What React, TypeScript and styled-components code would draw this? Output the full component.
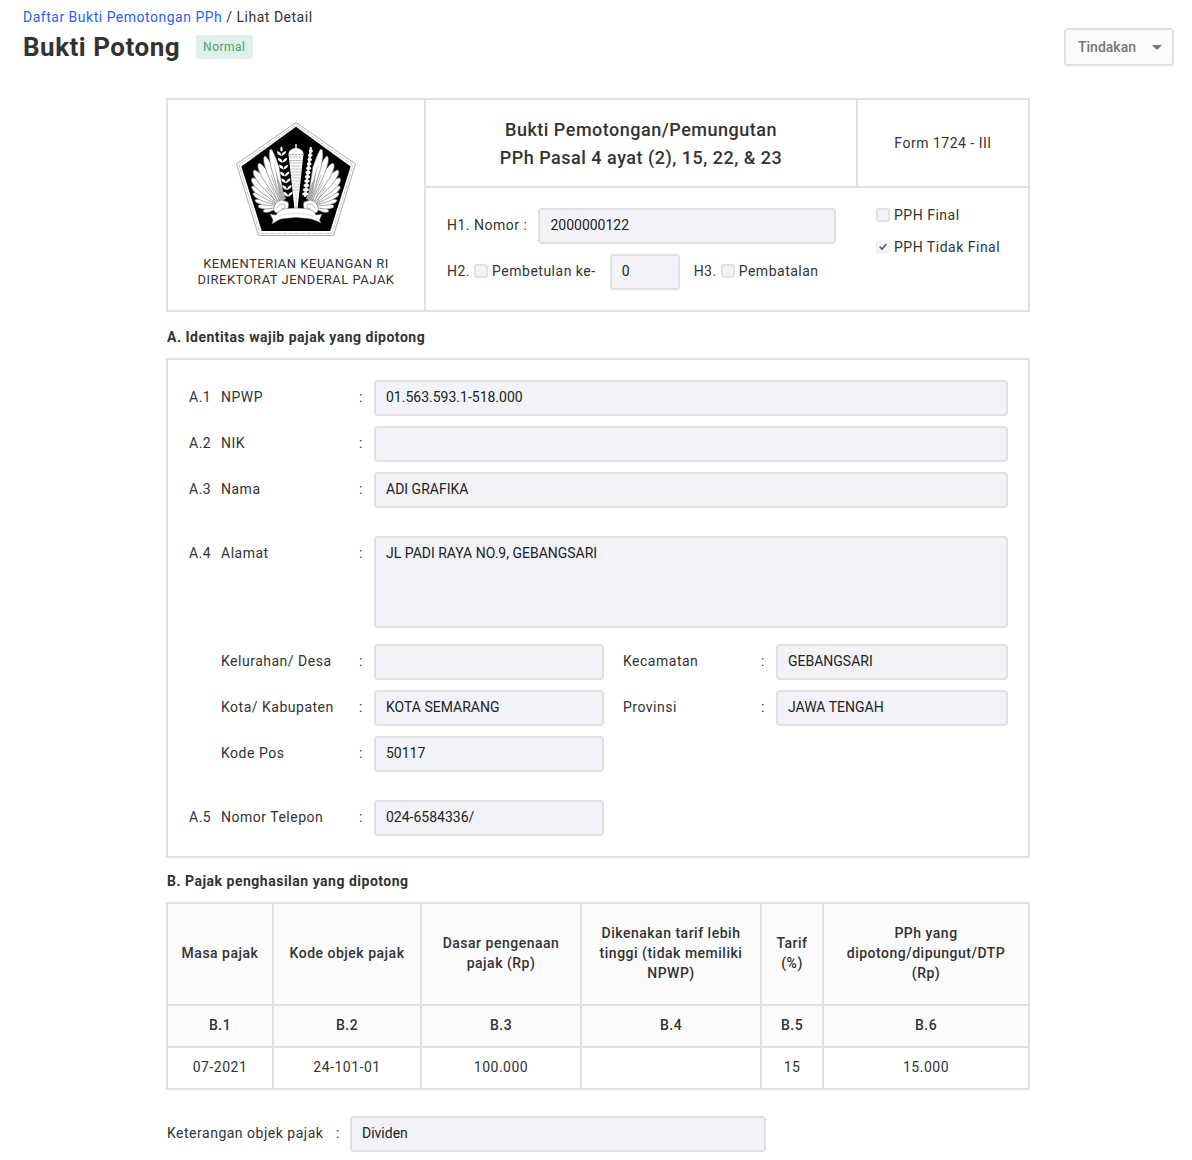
import React from "react";
import styled, { createGlobalStyle } from "styled-components";

const color = {
  text: "#333333",
  line: "#e0e0e0",
  field: "#f2f3f8",
  soft: "#fbfbfb",
  muted: "#757575",
  link: "#2d5ff0",
};

const GlobalStyle = createGlobalStyle`
  *, *::before, *::after { box-sizing: border-box; }
  body {
    margin: 0;
    background: #ffffff;
    color: ${color.text};
    font-family: Roboto, "Liberation Sans", sans-serif;
    font-size: 14px;
    line-height: 20px;
    letter-spacing: 0.036em;
  }
`;

const Page = styled.div`
  padding: 8px 18px 8px 22px;
`;

const TopBar = styled.header`
  display: flex;
  align-items: flex-end;
  justify-content: space-between;
  margin-bottom: 32px;
  padding-left: 1px;
`;

const Breadcrumb = styled.nav`
  line-height: 18px;
  a {
    color: ${color.link};
    text-decoration: none;
  }
`;

const TitleRow = styled.div`
  display: flex;
  align-items: center;
  gap: 16px;
  height: 40px;
  padding-top: 2px;
`;

const Title = styled.h1`
  margin: 0;
  font-size: 26px;
  line-height: 32px;
  font-weight: 700;
`;

const Badge = styled.span`
  padding: 0 7px;
  border-radius: 3px;
  background: #dff0e8;
  color: #4da06f;
  font-size: 12px;
  line-height: 24px;
`;

const ActionButton = styled.button`
  display: flex;
  align-items: center;
  justify-content: space-between;
  gap: 14px;
  min-width: 110px;
  height: 38px;
  padding: 0 10px 0 12px;
  border: 2px solid ${color.line};
  border-radius: 4px;
  background: ${color.soft};
  color: ${color.muted};
  font: inherit;
  font-weight: 500;
`;

const Sheet = styled.main`
  width: 100%;
  max-width: 864px;
  margin: 0 auto;
`;

const FormHead = styled.section`
  display: grid;
  grid-template-columns: 258px 1fr;
  margin-bottom: 16px;
  border: 2px solid ${color.line};
`;

const Ministry = styled.div`
  display: flex;
  flex-direction: column;
  align-items: center;
  gap: 20px;
  padding: 22px 12px;
  border-right: 2px solid ${color.line};
  text-align: center;
  font-size: 13px;
  line-height: 16px;
`;

const HeadTop = styled.div`
  display: grid;
  grid-template-columns: 1fr 172px;
  border-bottom: 2px solid ${color.line};
`;

const FormTitle = styled.h2`
  margin: 0;
  padding: 16px 12px 14px;
  font-size: 18px;
  line-height: 28px;
  font-weight: 500;
  text-align: center;
`;

const FormCode = styled.div`
  display: flex;
  align-items: center;
  justify-content: center;
  border-left: 2px solid ${color.line};
`;

const HeadBottom = styled.div`
  display: grid;
  grid-template-columns: 1fr 132px;
  gap: 30px;
  padding: 20px 20px 20px 21px;
`;

const Stack = styled.div<{ $gap: number }>`
  display: flex;
  flex-direction: column;
  gap: ${(p) => p.$gap}px;
`;

const Inline = styled.div<{ $gap: number }>`
  display: flex;
  align-items: center;
  gap: ${(p) => p.$gap}px;
`;

const InlineLabel = styled.label`
  padding-bottom: 2px;
  white-space: nowrap;
`;

const CheckGroup = styled(Inline)`
  padding-bottom: 2px;
`;

const Input = styled.input<{ $width?: string }>`
  display: block;
  width: ${(p) => p.$width ?? "100%"};
  min-width: 0;
  height: 36px;
  padding: 0 10px 2px;
  border: 2px solid ${color.line};
  border-radius: 4px;
  background: ${color.field};
  color: #222222;
  font-family: inherit;
  font-size: 14px;
`;

const TextArea = styled.textarea`
  display: block;
  width: 100%;
  height: 92px;
  padding: 6px 10px;
  border: 2px solid ${color.line};
  border-radius: 4px;
  background: ${color.field};
  color: #222222;
  font-family: inherit;
  font-size: 14px;
  line-height: 18px;
  resize: none;
`;

const CheckLabel = styled.label`
  display: flex;
  align-items: center;
  gap: 4px;
  line-height: 14px;
  white-space: nowrap;
`;

const Checkbox = styled.input.attrs({ type: "checkbox" })`
  appearance: none;
  display: grid;
  place-items: center;
  flex: none;
  width: 14px;
  height: 14px;
  margin: 0;
  border: 2px solid ${color.line};
  border-radius: 3px;
  background: ${color.field};

  &:checked {
    border-color: ${color.field};
  }
  &:checked::before {
    content: "";
    width: 8px;
    height: 8px;
    background: #666666;
    clip-path: polygon(0 54%, 16% 38%, 38% 58%, 82% 6%, 100% 20%, 40% 94%);
  }
`;

const SectionTitle = styled.h3`
  margin: 0 0 12px;
  padding-left: 1px;
  font-size: 14px;
  line-height: 18px;
  font-weight: 700;
`;

const Identity = styled.section`
  display: flex;
  flex-direction: column;
  gap: 28px;
  margin-bottom: 14px;
  padding: 20px 20px 20px 21px;
  border: 2px solid ${color.line};
`;

const NumberedRow = styled.div`
  display: grid;
  grid-template-columns: 32px 1fr;
  line-height: 34px;
`;

const FieldRow = styled.div`
  display: grid;
  grid-template-columns: 138px 15px 1fr;
  line-height: 34px;
`;

const Halves = styled.div`
  display: grid;
  grid-template-columns: 383fr 385fr;
  gap: 10px 19px;
`;

const TaxTable = styled.table`
  width: 100%;
  margin-bottom: 26px;
  border-collapse: collapse;
  table-layout: fixed;
  text-align: center;

  th, td {
    height: 42px;
    padding: 0 12px 2px;
    border: 2px solid ${color.line};
  }
  th {
    background: ${color.soft};
    font-weight: 500;
  }
  thead tr:first-child th {
    height: 102px;
  }
`;

const NoteRow = styled.div`
  display: grid;
  grid-template-columns: 169px 14px minmax(0, 416px);
  padding-left: 1px;
  line-height: 34px;
`;

const FEATHERS: [number, number, number, number, number][] = [
  [35, 27, 46, 76, 8],
  [29, 34, 45, 77, 8],
  [23, 41, 44, 78, 9],
  [18, 48, 43, 79, 9],
  [16, 56, 42, 80, 9],
  [16, 64, 42, 81, 8],
  [17, 71, 42, 82, 7],
  [19, 78, 42, 83, 6],
  [22, 84, 42, 84, 6],
  [27, 89, 42, 85, 5],
];

function feather([tx, ty, rx, ry, w]: [number, number, number, number, number]) {
  const dx = rx - tx;
  const dy = ry - ty;
  const len = Math.hypot(dx, dy);
  const nx = (-dy / len) * (w / 2);
  const ny = (dx / len) * (w / 2);
  const ax = tx + dx * 0.38;
  const ay = ty + dy * 0.38;
  return `M${tx} ${ty} Q${tx + nx} ${ty + ny} ${ax + nx} ${ay + ny} L${rx + nx * 0.5} ${ry + ny * 0.5} L${rx - nx * 0.5} ${ry - ny * 0.5} L${ax - nx} ${ay - ny} Q${tx - nx * 0.4} ${ty - ny * 0.4} ${tx} ${ty}Z`;
}

function Wing() {
  return (
    <g>
      {[...FEATHERS].reverse().map((f) => (
        <path key={f[1]} d={feather(f)} fill="#fff" stroke="#666" strokeWidth=".6" />
      ))}
      <path d="M36 31 Q40 52 45 64 L50 77 L44 79 Q41 55 36 31Z" fill="#aaa" />
      <path d="M33 60 Q38 68 41 80 M30 65 Q36 71 39 82 M35 53 Q40 64 43 78" fill="none" stroke="#888" strokeWidth=".6" />
      <path d="M38 86 Q39 79 46 78 L52 80 Q54 85 50 89 L41 91 Q37 90 38 86Z" fill="#fff" stroke="#777" strokeWidth=".5" />
      <path d="M41 86 Q44 80 49 83 Q50 87 45 87" fill="none" stroke="#999" strokeWidth=".7" />
    </g>
  );
}

function Emblem() {
  const grains = [0, 1, 2, 3, 4, 5, 6];
  const stripes = [41, 44, 47, 50, 53, 56, 59, 62, 65, 68];
  return (
    <svg width="120" height="114" viewBox="0 0 120 114" role="img" aria-label="Kementerian Keuangan">
      <path d="M60 .5 L119.5 42 L97.5 113.5 H22.5 L.5 42Z" fill="#fff" stroke="#888" strokeWidth=".7" />
      <path d="M60 2.8 L117 43.2 L96 111.4 H24 L3 43.2Z" fill="none" stroke="#999" strokeWidth=".5" strokeDasharray="5 1" />
      <path d="M60 4.8 L114.6 44.5 L94.2 109 H25.8 L5.4 44.5Z" fill="#000" />
      <Wing />
      <g transform="translate(120 0) scale(-1 1)">
        <Wing />
      </g>
      {grains.map((i) => (
        <g key={i} transform={`translate(${45.5 + i * 1.1} ${34 + i * 6.8})`} fill="#fff">
          <path d="M0 0 Q-5 -1 -4.500 -5 Q0 -4 0 0Z" />
          <path d="M0 0 Q5 -2 4.500 -5 Q0 -4 0 0Z" />
        </g>
      ))}
      <ellipse cx="45.500" cy="27" rx="1.200" ry="2.500" fill="#fff" />
      <path d="M75 25 L69 75" stroke="#ddd" strokeWidth="2.400" />
      {[...Array(11)].map((_, i) => (
        <ellipse key={i} cx={74.8 - i * 0.55} cy={29 + i * 4.3} rx={2.1 + i * 0.1} ry="1.700" fill="#fff" />
      ))}
      <path d="M59.300 22 h1.400 v4 Q67 27 67.600 32 L66.800 38 L61.600 86 H58.400 L53.200 38 L52.400 32 Q53 27 59.300 26Z" fill="#fff" />
      <path d="M53 32.500 H67 M53.500 35 H66.500 M53.500 38.500 H66.500" stroke="#777" strokeWidth=".7" strokeDasharray="2 1" />
      {stripes.map((y) => {
        const half = 6.2 - (y - 41) * 0.1;
        return <path key={y} d={`M${60 - half} ${y} H${60 + half}`} stroke="#aaa" strokeWidth=".7" />;
      })}
      <path d="M60 70 V86" stroke="#aaa" strokeWidth=".5" />
      <path d="M34 92 L40 93 Q43 88 48 87 Q60 85 72 87 Q78 88 80 93 L86 92 L83.500 98 L85 101 Q79 98 75 97 Q60 94 45 97 Q40 99 36 102 L37 98Z" fill="#fff" stroke="#666" strokeWidth=".5" />
      <path d="M43 94 Q60 89 77 94" fill="none" stroke="#bbb" strokeWidth="1" strokeDasharray="1.500 1.500" />
    </svg>
  );
}

type FieldProps = { id: string; label: string; value: string; multiline?: boolean };

function Field({ id, label, value, multiline }: FieldProps) {
  return (
    <FieldRow>
      <label htmlFor={id}>{label}</label>
      <span>:</span>
      {multiline ? <TextArea id={id} readOnly value={value} /> : <Input id={id} readOnly value={value} />}
    </FieldRow>
  );
}

const COLUMNS = [
  { width: 106, title: "Masa pajak", code: "B.1", value: "07-2021" },
  { width: 148, title: "Kode objek pajak", code: "B.2", value: "24-101-01" },
  { width: 160, title: "Dasar pengenaan pajak (Rp)", code: "B.3", value: "100.000" },
  { width: 180, title: "Dikenakan tarif lebih tinggi (tidak memiliki NPWP)", code: "B.4", value: "" },
  { width: 62, title: "Tarif (%)", code: "B.5", value: "15" },
  { width: 206, title: "PPh yang dipotong/dipungut/DTP (Rp)", code: "B.6", value: "15.000" },
];

export default function App() {
  return (
    <Page>
      <GlobalStyle />
      <TopBar>
        <div>
          <Breadcrumb aria-label="Breadcrumb">
            <a href="#daftar">Daftar Bukti Pemotongan PPh</a> / <span>Lihat Detail</span>
          </Breadcrumb>
          <TitleRow>
            <Title>Bukti Potong</Title>
            <Badge>Normal</Badge>
          </TitleRow>
        </div>
        <ActionButton type="button" aria-haspopup="menu">
          Tindakan
          <svg width="10" height="5" viewBox="0 0 10 5" aria-hidden="true">
            <path d="M0 0 H10 L5 5Z" fill={color.muted} />
          </svg>
        </ActionButton>
      </TopBar>

      <Sheet>
        <FormHead>
          <Ministry>
            <Emblem />
            <div>
              KEMENTERIAN KEUANGAN RI
              <br />
              DIREKTORAT JENDERAL PAJAK
            </div>
          </Ministry>
          <div>
            <HeadTop>
              <FormTitle>
                Bukti Pemotongan/Pemungutan
                <br />
                PPh Pasal 4 ayat (2), 15, 22, &amp; 23
              </FormTitle>
              <FormCode>Form 1724 - III</FormCode>
            </HeadTop>
            <HeadBottom>
              <Stack $gap={10}>
                <Inline $gap={11}>
                  <InlineLabel htmlFor="nomor">H1. Nomor :</InlineLabel>
                  <Input id="nomor" $width="298px" readOnly value="2000000122" />
                </Inline>
                <Inline $gap={14}>
                  <CheckGroup $gap={4}>
                    <span>H2.</span>
                    <CheckLabel>
                      <Checkbox disabled />
                      Pembetulan ke-
                    </CheckLabel>
                  </CheckGroup>
                  <Input aria-label="Pembetulan ke-" $width="70px" readOnly value="0" />
                  <CheckGroup $gap={4}>
                    <span>H3.</span>
                    <CheckLabel>
                      <Checkbox disabled />
                      Pembatalan
                    </CheckLabel>
                  </CheckGroup>
                </Inline>
              </Stack>
              <Stack $gap={18}>
                <CheckLabel>
                  <Checkbox disabled />
                  PPH Final
                </CheckLabel>
                <CheckLabel>
                  <Checkbox disabled defaultChecked />
                  PPH Tidak Final
                </CheckLabel>
              </Stack>
            </HeadBottom>
          </div>
        </FormHead>

        <SectionTitle>A. Identitas wajib pajak yang dipotong</SectionTitle>
        <Identity>
          <Stack $gap={10}>
            <NumberedRow>
              <span>A.1</span>
              <Field id="npwp" label="NPWP" value="01.563.593.1-518.000" />
            </NumberedRow>
            <NumberedRow>
              <span>A.2</span>
              <Field id="nik" label="NIK" value="" />
            </NumberedRow>
            <NumberedRow>
              <span>A.3</span>
              <Field id="nama" label="Nama" value="ADI GRAFIKA" />
            </NumberedRow>
          </Stack>
          <NumberedRow>
            <span>A.4</span>
            <Stack $gap={16}>
              <Field id="alamat" label="Alamat" value="JL PADI RAYA NO.9, GEBANGSARI" multiline />
              <Halves>
                <Field id="kelurahan" label="Kelurahan/ Desa" value="" />
                <Field id="kecamatan" label="Kecamatan" value="GEBANGSARI" />
                <Field id="kota" label="Kota/ Kabupaten" value="KOTA SEMARANG" />
                <Field id="provinsi" label="Provinsi" value="JAWA TENGAH" />
                <Field id="kodepos" label="Kode Pos" value="50117" />
              </Halves>
            </Stack>
          </NumberedRow>
          <NumberedRow>
            <span>A.5</span>
            <Halves>
              <Field id="telepon" label="Nomor Telepon" value="024-6584336/" />
            </Halves>
          </NumberedRow>
        </Identity>

        <SectionTitle>B. Pajak penghasilan yang dipotong</SectionTitle>
        <TaxTable>
          <colgroup>
            {COLUMNS.map((c) => (
              <col key={c.code} width={c.width} />
            ))}
          </colgroup>
          <thead>
            <tr>
              {COLUMNS.map((c) => (
                <th key={c.code} scope="col">{c.title}</th>
              ))}
            </tr>
            <tr>
              {COLUMNS.map((c) => (
                <th key={c.code} scope="col">{c.code}</th>
              ))}
            </tr>
          </thead>
          <tbody>
            <tr>
              {COLUMNS.map((c) => (
                <td key={c.code}>{c.value}</td>
              ))}
            </tr>
          </tbody>
        </TaxTable>

        <NoteRow>
          <label htmlFor="keterangan">Keterangan objek pajak</label>
          <span>:</span>
          <Input id="keterangan" readOnly value="Dividen" />
        </NoteRow>
      </Sheet>
    </Page>
  );
}
